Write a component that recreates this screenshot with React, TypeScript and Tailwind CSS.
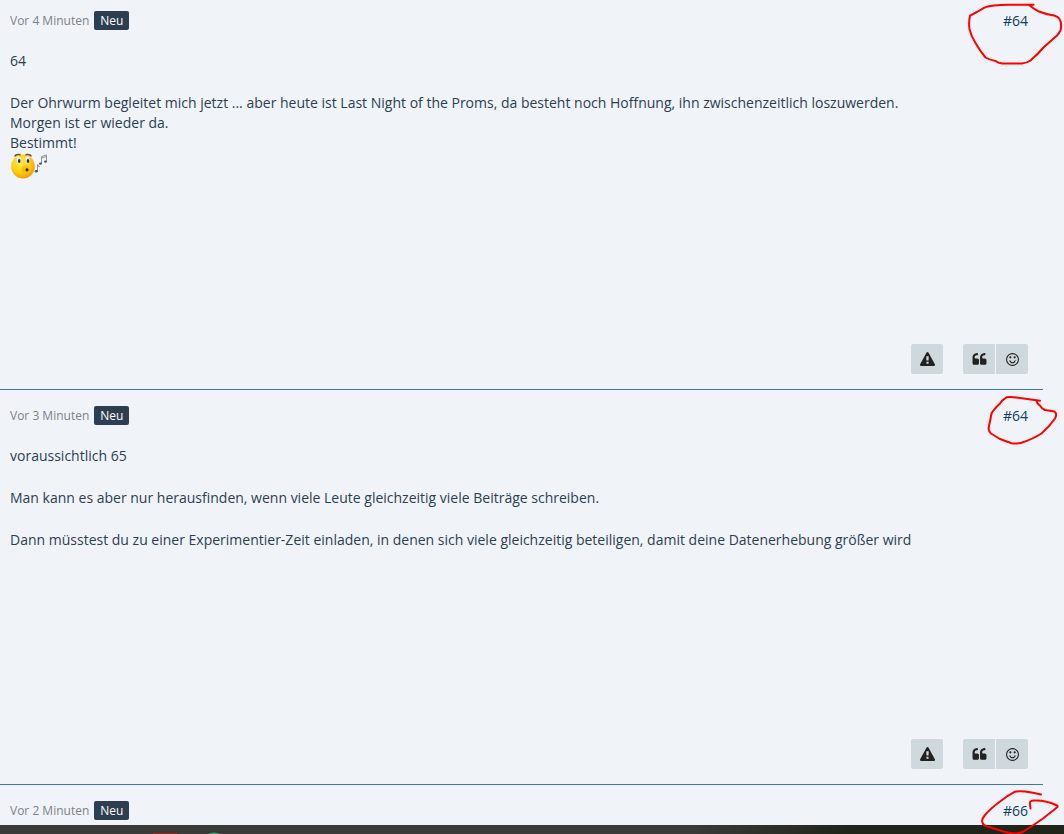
import type { ReactNode } from "react";

type Post = {
  id: number;
  time: string;
  number: string;
  paragraphs: string[][];
  whistle?: boolean;
  mark: string;
};

const posts: Post[] = [
  {
    id: 1,
    time: "Vor 4 Minuten",
    number: "#64",
    paragraphs: [
      ["64"],
      [
        "Der Ohrwurm begleitet mich jetzt ... aber heute ist Last Night of the Proms, da besteht noch Hoffnung, ihn zwischenzeitlich loszuwerden.",
        "Morgen ist er wieder da.",
        "Bestimmt!",
      ],
    ],
    whistle: true,
    mark: "M69.5 4.7L45 4.7Q36 5 30 5.5Q23 6.5 20 7.8L13 12L6 15.7Q4.500 22 5.500 29Q7 36 11.500 43Q16 51 21.500 57.500Q26 60 31.500 61Q34 63 38 63.500L58 63.500Q63 63 66.500 60.500Q74 54 80 47L93 35.500Q97 31 97 28Q97.500 22 95.500 19Q94 16.500 90 15.500Q81 14 75 11.500Q69 8.500 65 5",
  },
  {
    id: 2,
    time: "Vor 3 Minuten",
    number: "#64",
    paragraphs: [
      ["voraussichtlich 65"],
      ["Man kann es aber nur herausfinden, wenn viele Leute gleichzeitig viele Beiträge schreiben."],
      [
        "Dann müsstest du zu einer Experimentier-Zeit einladen, in denen sich viele gleichzeitig beteiligen, damit deine Datenerhebung größer wird",
      ],
    ],
    mark: "M76 10.700L52.500 7.500Q46 6.500 42.500 7.300Q38 10 36 13.500Q30 19 27.500 23.500Q26 32 24.500 38.500Q25 42 27 43.500L36 49L47.500 53.300Q53 54 57.500 52.700Q69 49 77.500 43.500Q86 36 91 28.500Q93.500 24 90.500 21.500L81 20Q77 18 76 15.700Q73 14 72.500 11",
  },
  {
    id: 3,
    time: "Vor 2 Minuten",
    number: "#66",
    paragraphs: [],
    mark: "M77 9.500Q69 7.500 61 6.500Q55 6 51 6.700Q43 11 36 16.500Q26 24 21 30Q17 35 18.500 37.500Q19 40 22 41L39.500 46.500Q47 48.500 51 48.500Q55 48.500 59.500 46.500Q70 40 79 33.500Q86 28 93.500 22Q94 20.500 92 20Q87 17.500 82.500 16.700Q76 15 69.500 15.500Q65 16 66 19L66.500 23.500",
  },
];

const icons = {
  report:
    "M1024 1375v-190q0-14-9.5-23.5t-22.5-9.5h-192q-13 0-22.5 9.5t-9.5 23.5v190q0 14 9.5 23.5t22.5 9.5h192q13 0 22.5-9.5t9.5-23.5zm-2-374l18-459q0-12-10-19-13-11-24-11h-220q-11 0-24 11-10 7-10 21l17 457q0 10 10 16.5t24 6.5h185q14 0 23.5-6.5t10.5-16.5zm-14-934l768 1408q35 63-2 126-17 29-46.5 46t-63.5 17h-1536q-34 0-63.5-17t-46.5-46q-37-63-2-126l768-1408q17-31 47-49t65-18 65 18 47 49z",
  quote:
    "M832 960v384q0 80-56 136t-136 56h-384q-80 0-136-56t-56-136v-704q0-104 40.5-198.5t109.5-163.5 163.5-109.5 198.5-40.5h64q26 0 45 19t19 45v128q0 26-19 45t-45 19h-64q-106 0-181 75t-75 181v32q0 40 28 68t68 28h224q80 0 136 56t56 136zm896 0v384q0 80-56 136t-136 56h-384q-80 0-136-56t-56-136v-704q0-104 40.5-198.5t109.5-163.5 163.5-109.5 198.5-40.5h64q26 0 45 19t19 45v128q0 26-19 45t-45 19h-64q-106 0-181 75t-75 181v32q0 40 28 68t68 28h224q80 0 136 56t56 136z",
  react:
    "M1262 1075q-37 121-138 195t-228 74-228-74-138-195q-8-25 4-48.5t38-31.5q25-8 48.5 4t31.5 38q25 80 92.5 129.5t151.5 49.5 151.5-49.5 92.5-129.5q8-26 32-38t49-4 37 31.5 4 48.5zm-494-435q0 53-37.5 90.5t-90.5 37.5-90.5-37.5-37.5-90.5 37.5-90.5 90.5-37.5 90.5 37.5 37.5 90.5zm512 0q0 53-37.5 90.5t-90.5 37.5-90.5-37.5-37.5-90.5 37.5-90.5 90.5-37.5 90.5 37.5 37.5 90.5zm256 256q0-130-51-248.5t-136.5-204-204-136.5-248.5-51-248.5 51-204 136.5-136.5 204-51 248.5 51 248.5 136.5 204 204 136.5 248.5 51 248.5-51 204-136.5 136.5-204 51-248.5zm128 0q0 209-103 385.5t-279.5 279.5-385.5 103-385.5-103-279.5-279.5-103-385.5 103-385.5 279.5-279.5 385.5-103 385.5 103 279.5 279.5 103 385.5z",
};

function IconButton({ label, path, rounded }: { label: string; path: string; rounded: string }) {
  return (
    <button
      type="button"
      aria-label={label}
      className={`flex h-[30px] w-8 items-center justify-center bg-[#cfd8dc] text-[#212121] ${rounded}`}
    >
      <svg viewBox="0 0 1792 1792" className="size-[15px]" fill="currentColor" aria-hidden="true">
        <path d={path} />
      </svg>
    </button>
  );
}

function WhistleSmiley() {
  return (
    <svg viewBox="0 0 38 28" className="h-7 w-[38px]" aria-hidden="true">
      <defs>
        <radialGradient id="face" cx="0.4" cy="0.35" r="0.65">
          <stop offset="0" stopColor="#ffec4a" />
          <stop offset="0.6" stopColor="#ffcf12" />
          <stop offset="1" stopColor="#eda308" />
        </radialGradient>
      </defs>
      <ellipse cx="13" cy="13.500" rx="11.800" ry="12" fill="url(#face)" />
      <path d="M4.500 3.500Q6 0.800 10.500 1.800M15.500 1.800Q20 0.800 21.500 3.500" fill="none" stroke="#7c4a13" strokeWidth="1.500" />
      <ellipse cx="8.800" cy="6.800" rx="2.200" ry="3.800" fill="#e6ebee" />
      <ellipse cx="17.500" cy="6.800" rx="2.200" ry="3.800" fill="#e6ebee" />
      <ellipse cx="9.200" cy="8" rx="1.300" ry="2" fill="#26303c" />
      <ellipse cx="18" cy="8" rx="1.300" ry="2" fill="#26303c" />
      <circle cx="15.500" cy="16.500" r="4" fill="#fbbd0e" />
      <ellipse cx="17" cy="16.800" rx="1.500" ry="1.600" fill="#3a1c05" />
      <g fill="none" stroke="#888" strokeWidth="0.900">
        <path d="M27.500 18V11.500L29.500 14" />
        <path d="M31.500 10.500V3.500L36.500 2V8.500M31.500 5L36.500 3.500" />
      </g>
      <g fill="#555">
        <ellipse cx="26.300" cy="18.300" rx="1.600" ry="1.200" />
        <ellipse cx="30.500" cy="10.700" rx="1.500" ry="1.100" />
        <ellipse cx="35.500" cy="8.700" rx="1.500" ry="1.100" />
      </g>
    </svg>
  );
}

function Actions() {
  return (
    <footer className="mt-auto flex justify-end gap-5">
      <IconButton label="Inhalt melden" path={icons.report} rounded="rounded-xs" />
      <div className="flex gap-px">
        <IconButton label="Zitieren" path={icons.quote} rounded="rounded-l-xs" />
        <IconButton label="Reagieren" path={icons.react} rounded="rounded-r-xs" />
      </div>
    </footer>
  );
}

function PostItem({ post, children }: { post: Post; children?: ReactNode }) {
  return (
    <article className="relative flex flex-col border-b border-[#3c76ae] pt-4 pr-[15px] pb-[15px] pl-[10px] not-last:min-h-[395px] first:min-h-[390px] first:pt-[11px] last:border-b-0 last:pb-[5px]">
      <header className="flex h-[19px] items-center justify-between">
        <div className="flex items-center gap-[5px]">
          <time className="text-xs text-[#7d8287]">{post.time}</time>
          <span className="rounded-xs bg-[#2c3e50] px-1.5 text-xs leading-[19px] text-white">Neu</span>
        </div>
        <a href={`#post${post.id}`} className="text-sm leading-5 text-[#0f3d66]">
          {post.number}
        </a>
      </header>
      {children}
      <svg
        viewBox="0 0 100 66"
        className="pointer-events-none absolute top-0 -right-[21px] z-10 h-[66px] w-[100px]"
        aria-hidden="true"
      >
        <path d={post.mark} fill="none" stroke="#f00" strokeWidth="2" strokeLinecap="round" strokeLinejoin="round" />
      </svg>
    </article>
  );
}

export default function App() {
  return (
    <div className="overflow-hidden bg-[#f0f4f9] font-['Open_Sans',sans-serif] text-[#2c3e50]">
      <main className="pr-[21px]">
        {posts.map((post) => (
          <PostItem key={post.id} post={post}>
            {post.paragraphs.length > 0 && (
              <>
                <div className="mt-[21px] flex flex-col gap-[22px] text-sm leading-5">
                  {post.paragraphs.map((lines) => (
                    <div key={lines[0]}>
                      {lines.map((line) => (
                        <p key={line}>{line}</p>
                      ))}
                    </div>
                  ))}
                </div>
                {post.whistle && <WhistleSmiley />}
                <Actions />
              </>
            )}
          </PostItem>
        ))}
      </main>
      <div className="h-[9px] bg-linear-to-r from-[#3a3a39] from-65% to-[#1f2519] to-80%">
        <svg viewBox="0 0 240 9" className="h-[9px] w-60" aria-hidden="true">
          <path d="M153 8H177V9H153Z" fill="#a3211c" />
          <path d="M208 9Q214 6 220 9Z" fill="#3fa878" />
        </svg>
      </div>
    </div>
  );
}
